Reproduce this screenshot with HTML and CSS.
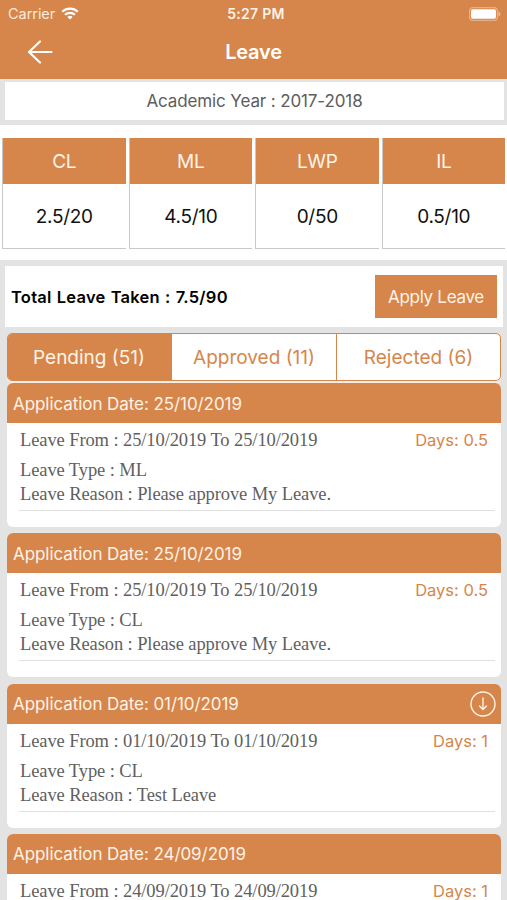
FILE: index.html
```html
<!DOCTYPE html>
<html lang="en">
<head>
<meta charset="utf-8">
<title>Leave</title>
<link rel="stylesheet" href="styles.css">
</head>
<body>
<div class="screen">
  <header class="header">
    <div class="status">
      <div class="carrier"><span>Carrier</span>
        <svg class="wifi" width="18" height="13" viewBox="0 0 18 13" fill="none" stroke="#fff" stroke-width="2.2"><path d="M1.2 4.7a11.2 11.2 0 0 1 15.6 0"/><path d="M4 7.8a7.2 7.2 0 0 1 10 0"/><path d="M9 12.6 6.4 10a3.8 3.8 0 0 1 5.2 0z" fill="#fff" stroke="none"/></svg>
      </div>
      <span class="time">5:27 PM</span>
      <svg class="battery" width="32" height="14" viewBox="0 0 32 14"><rect x=".6" y=".6" width="27.8" height="12.8" rx="3.4" fill="none" stroke="#fff" stroke-opacity=".35" stroke-width="1.2"/><rect x="2" y="2.2" width="25" height="9.6" rx="1.8" fill="#fff"/><path d="M29.5 4.6q2 .8 2 2.4t-2 2.4z" fill="#fff" fill-opacity=".45"/></svg>
    </div>
    <div class="nav">
      <svg class="back" width="26" height="24" viewBox="0 0 26 24" fill="none" stroke="#fff" stroke-width="2.2" stroke-linecap="round" stroke-linejoin="round"><path d="M13 1.5 2 12l11 10.5M2 12h22.5"/></svg>
      <h1>Leave</h1>
    </div>
  </header>
  <div class="year"><span>Academic Year : 2017-2018</span></div>
  <section class="balances">
    <div class="balance"><div class="kind">CL</div><div class="amount">2.5/20</div></div>
    <div class="balance"><div class="kind">ML</div><div class="amount">4.5/10</div></div>
    <div class="balance"><div class="kind">LWP</div><div class="amount">0/50</div></div>
    <div class="balance"><div class="kind">IL</div><div class="amount">0.5/10</div></div>
  </section>
  <section class="total"><span class="sum">Total Leave Taken : 7.5/90</span><button class="apply">Apply Leave</button></section>
  <nav class="tabs"><div class="tab active">Pending (51)</div><div class="tab approved">Approved (11)</div><div class="tab">Rejected (6)</div></nav>
  <main class="list">
    <article class="card">
      <div class="card-head"><span>Application Date: 25/10/2019</span></div>
      <div class="card-body">
        <div class="row"><span>Leave From : 25/10/2019 To 25/10/2019</span><span class="days">Days: 0.5</span></div>
        <div class="type">Leave Type : ML</div>
        <div class="reason">Leave Reason : Please approve My Leave.</div>
      </div>
    </article>
    <article class="card">
      <div class="card-head"><span>Application Date: 25/10/2019</span></div>
      <div class="card-body">
        <div class="row"><span>Leave From : 25/10/2019 To 25/10/2019</span><span class="days">Days: 0.5</span></div>
        <div class="type">Leave Type : CL</div>
        <div class="reason">Leave Reason : Please approve My Leave.</div>
      </div>
    </article>
    <article class="card">
      <div class="card-head"><span>Application Date: 01/10/2019</span>
        <svg width="26" height="26" viewBox="0 0 26 26" fill="none" stroke="#fff3e8" stroke-width="1.4" stroke-linecap="round"><circle cx="13" cy="13" r="12"/><path d="M13 7v11.5M9.5 15l3.5 3.5 3.5-3.5"/></svg>
      </div>
      <div class="card-body">
        <div class="row"><span>Leave From : 01/10/2019 To 01/10/2019</span><span class="days">Days: 1</span></div>
        <div class="type">Leave Type : CL</div>
        <div class="reason">Leave Reason : Test Leave</div>
      </div>
    </article>
    <article class="card">
      <div class="card-head"><span>Application Date: 24/09/2019</span></div>
      <div class="card-body">
        <div class="row"><span>Leave From : 24/09/2019 To 24/09/2019</span><span class="days">Days: 1</span></div>
      </div>
    </article>
  </main>
</div>
</body>
</html>
```
FILE: styles.css
```css
* { box-sizing: border-box; }
body { margin: 0; font-family: Inter, sans-serif; }
.screen { width: 507px; height: 900px; overflow: hidden; background: #e3e3e3; display: flex; flex-direction: column; }
.screen > * { flex-shrink: 0; }

.header { height: 79px; background: #d6864a; color: #fff; margin-bottom: 3px; }
.status { height: 27px; padding: 0 6px 0 8px; display: grid; grid-template-columns: 1fr auto 1fr; align-items: center; line-height: 27px; }
.carrier { display: flex; align-items: center; gap: 6px; color: #fbe9dc; font-size: 14.5px; letter-spacing: -.05px; }
.time { font-weight: 600; font-size: 14px; letter-spacing: .3px; margin-left: 3px; color: #fff3e8; }
.battery { justify-self: end; }
.nav { height: 52px; display: grid; grid-template-columns: 26px 1fr 26px; align-items: center; padding: 0 27px 2px; }
.nav h1 { margin: 0; text-align: center; font-size: 20px; font-weight: 600; line-height: 50px; letter-spacing: -.2px; }

.year { height: 38px; margin: 0 3px 5px 5px; background: #fff; display: flex; align-items: center; justify-content: center; color: #5d5d5d; font-size: 17px; letter-spacing: -.12px; }

.balances { height: 135px; padding: 13px 2px 0 2px; margin-bottom: 6px; background: #fff; display: grid; grid-template-columns: repeat(4, 1fr); column-gap: 3px; align-items: start; }
.balance { height: 111px; border-left: 1px solid #c8c8c8; border-bottom: 1px solid #c8c8c8; text-align: center; }
.kind { height: 46px; line-height: 47px; background: #d6864a; color: #fff3e8; font-size: 19px; letter-spacing: -.3px; }
.amount { height: 64px; line-height: 65px; color: #111; font-size: 19px; letter-spacing: -.3px; }

.total { height: 61px; margin: 0 4px 6px 5px; padding: 0 6px; background: #fff; display: flex; align-items: center; justify-content: space-between; }
.sum { font-weight: 600; font-size: 16.5px; letter-spacing: .25px; word-spacing: .7px; color: #000; }
.apply { width: 122px; height: 43px; padding: 0; border: 0; background: #d6864a; color: #fff3e8; font: 17px Inter, sans-serif; letter-spacing: -.3px; }

.tabs { height: 48px; margin: 0 6px 2px 7px; display: grid; grid-template-columns: 164px 165px 1fr; border: 1px solid #d6864a; border-radius: 5px; background: #fff; overflow: hidden; box-shadow: 0 2px 0 #f5eee6; }
.tab { display: flex; align-items: center; justify-content: center; color: #d6864a; font-size: 19px; }
.approved { border-right: 1px solid #d6864a; }
.active { background: #d6864a; color: #fff3e8; padding-right: 2px; }

.list { margin: 0 6px 0 7px; display: flex; flex-direction: column; gap: 6.3px; }
.card { height: 144px; border-radius: 6px; background: #fff; overflow: hidden; flex-shrink: 0; }
.card-head { height: 40px; padding: 1px 5px 0 6px; background: #d6864a; color: #fff3e8; font-size: 17px; letter-spacing: -.07px; display: flex; align-items: center; justify-content: space-between; }
.card-body { margin: 0 6px 0 12px; height: 88px; border-bottom: 1px solid #e0e0e0; padding: 5px 0 0 1px; color: #5f5f5f; font: 18.5px/24px "Liberation Serif", serif; letter-spacing: -.1px; }
.row { display: flex; justify-content: space-between; padding-right: 7px; margin-bottom: 6px; }
.days { font-family: Inter, sans-serif; font-size: 16.5px; letter-spacing: 0; color: #d6864a; }
```
